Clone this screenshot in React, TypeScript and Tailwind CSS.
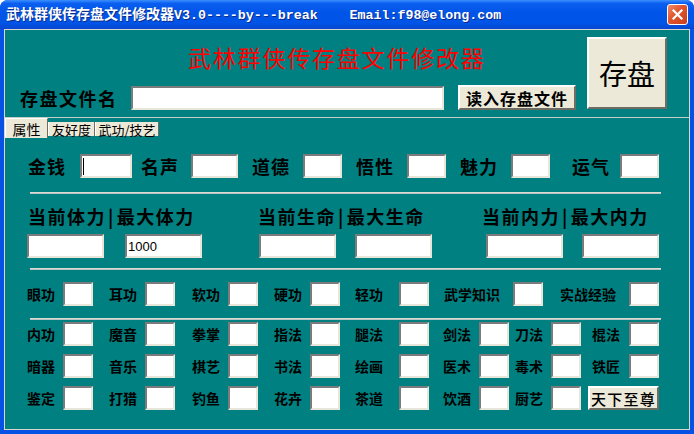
import React from "react"

const cjk = "font-['Noto_Sans_CJK_SC',sans-serif]"

type Item = { label: string; w: string; lw: string; iw?: string }

const topRow: Item[] = [
  { label: "金钱", w: "w-[113px]", lw: "w-[52px]", iw: "w-[52px]" },
  { label: "名声", w: "w-[111px]", lw: "w-[50px]", iw: "w-[47px]" },
  { label: "道德", w: "w-[104px]", lw: "w-[51px]", iw: "w-[39px]" },
  { label: "悟性", w: "w-[104px]", lw: "w-[51px]", iw: "w-[39px]" },
  { label: "魅力", w: "w-[112px]", lw: "w-[51px]", iw: "w-[39px]" },
  { label: "运气", w: "w-[87px]", lw: "w-[48px]", iw: "w-[39px]" },
]

const skillRow: Item[] = [
  { label: "眼功", w: "w-[82px]", lw: "w-[36px]" },
  { label: "耳功", w: "w-[83px]", lw: "w-[36px]" },
  { label: "软功", w: "w-[82px]", lw: "w-[36px]" },
  { label: "硬功", w: "w-[81px]", lw: "w-[36px]" },
  { label: "轻功", w: "w-[89px]", lw: "w-[44px]" },
  { label: "武学知识", w: "w-[116px]", lw: "w-[69px]" },
  { label: "实战经验", w: "w-[100px]", lw: "w-[69px]" },
]

// the 8-column grid of arts; widths shared by the three rows
const artCols = [
  { w: "w-[82px]", lw: "w-[36px]" },
  { w: "w-[83px]", lw: "w-[36px]" },
  { w: "w-[82px]", lw: "w-[36px]" },
  { w: "w-[81px]", lw: "w-[36px]" },
  { w: "w-[88px]", lw: "w-[44px]" },
  { w: "w-[72px]", lw: "w-[36px]" },
  { w: "w-[77px]", lw: "w-[36px]" },
  { w: "w-[67px]", lw: "w-[37px]" },
]

const artRows = [
  ["内功", "魔音", "拳掌", "指法", "腿法", "剑法", "刀法", "棍法"],
  ["暗器", "音乐", "棋艺", "书法", "绘画", "医术", "毒术", "铁匠"],
  ["鉴定", "打猎", "钓鱼", "花卉", "茶道", "饮酒", "厨艺", ""],
]

function Box({ w, children }: { w: string; children?: React.ReactNode }) {
  return (
    <div
      className={`${w} h-[24px] shrink-0 bg-white border-2 border-t-[#7b7b7b] border-l-[#7b7b7b] border-r-[#e8e5da] border-b-[#e8e5da] flex items-center overflow-hidden`}
    >
      {children}
    </div>
  )
}

function Divider() {
  return <div className="ml-[25px] w-[631px] h-[2px] bg-[#dcdad2] border-b border-[#b9c5c0]" />
}

function SmallField({ label, w, lw }: { label: string; w: string; lw: string }) {
  return (
    <div className={`flex items-center ${w}`}>
      <span className={`${lw} ${cjk} text-[14px] font-bold leading-none text-black`}>{label}</span>
      <Box w="w-[30px]" />
    </div>
  )
}

function CloseButton() {
  return (
    <div className="w-[21px] h-[21px] rounded-[3px] border border-white bg-[linear-gradient(135deg,#f08a6a_0%,#e0532c_45%,#c8401c_100%)] flex items-center justify-center">
      <svg width="13" height="13" viewBox="0 0 13 13">
        <path d="M2.5 2.5 L10.5 10.5 M10.5 2.5 L2.5 10.5" stroke="white" strokeWidth="2.2" strokeLinecap="square" />
      </svg>
    </div>
  )
}

export default function App() {
  return (
    <div className="w-[694px] h-[434px] bg-white">
      <div className="w-full h-full flex flex-col rounded-t-[8px] overflow-hidden bg-[#0552e4]">
        {/* title bar */}
        <div className="h-[29px] shrink-0 flex items-center pl-[6px] pr-[6px] bg-[linear-gradient(to_bottom,#3d8ffc_0%,#0a5ff0_12%,#0055e8_45%,#0054e6_80%,#0746cf_100%)]">
          <span className="whitespace-pre text-white font-bold [text-shadow:1px_1px_0_#0c2a8a] font-['Liberation_Mono','Noto_Sans_CJK_SC',monospace] text-[13.3px] leading-none">
            <span className={`${cjk} text-[14px]`}>武林群侠传存盘文件修改器</span>
            {"V3.0----by---break    Email:f98@elong.com"}
          </span>
          <div className="ml-auto">
            <CloseButton />
          </div>
        </div>

        {/* client area */}
        <div className="flex-1 mx-[4px] mb-[4px] border border-[#d6d8d0] bg-[#008080] flex flex-col">
          {/* header */}
          <div className="h-[87px] shrink-0 flex">
            <div className="w-[582px] flex flex-col">
              <div className={`mt-[13px] h-[28px] leading-[28px] pl-[183px] ${cjk} text-[23px] tracking-[1.8px] text-[#ff0000]`}>
                武林群侠传存盘文件修改器
              </div>
              <div className="mt-[14px] flex items-center pl-[15px]">
                <span className={`w-[111px] ${cjk} text-[18px] font-bold tracking-[1.5px] text-black leading-none`}>
                  存盘文件名
                </span>
                <Box w="w-[313px]" />
                <button
                  className={`ml-[14px] w-[118px] h-[25px] bg-[#ece9d8] border-2 border-t-white border-l-white border-r-[#6f6d63] border-b-[#6f6d63] ${cjk} text-[16px] font-bold tracking-[1px] leading-none text-black`}
                >
                  读入存盘文件
                </button>
              </div>
            </div>
            <button
              className={`mt-[7px] w-[80px] h-[72px] bg-[#ece9d8] border-2 border-t-white border-l-white border-r-[#6f6d63] border-b-[#6f6d63] ${cjk} text-[28px] leading-none text-black`}
            >
              存盘
            </button>
          </div>

          {/* tabs */}
          <div className="h-[21px] shrink-0 border-t border-[#c4ccc8] flex items-start">
            <div className={`h-[20px] w-[43px] bg-[#ece9d8] border-t border-l border-white border-r border-r-[#6f6d63] flex items-center justify-center ${cjk} text-[14px] text-black leading-none`}>
              属性
            </div>
            <div className={`mt-[4px] h-[14px] w-[47px] bg-[#ece9d8] border-l border-white border-r border-r-[#6f6d63] flex items-center justify-center ${cjk} text-[13px] text-black leading-none`}>
              友好度
            </div>
            <div className={`mt-[4px] h-[14px] w-[64px] bg-[#ece9d8] border-l border-white border-r border-r-[#6f6d63] flex items-center justify-center ${cjk} text-[13px] text-black leading-none`}>
              武功/技艺
            </div>
          </div>

          {/* attributes panel */}
          <div className="flex-1 flex flex-col">
            <div className="mt-[16px] pl-[23px] flex items-center">
              {topRow.map((it, i) => (
                <div key={it.label} className={`flex items-center ${it.w}`}>
                  <span className={`${it.lw} ${cjk} text-[18px] font-bold tracking-[1px] leading-none text-black`}>{it.label}</span>
                  <Box w={it.iw ?? "w-[39px]"}>
                    {i === 0 && <div className="ml-[1px] w-[1px] h-[17px] bg-black" />}
                  </Box>
                </div>
              ))}
            </div>

            <div className="mt-[14px]">
              <Divider />
            </div>

            <div className={`mt-[10px] h-[24px] pl-[23px] flex items-center ${cjk} text-[18px] font-bold tracking-[1.5px] leading-none text-black`}>
              <span className="w-[230px] whitespace-nowrap">
                当前体力<span className="mx-[2px]">|</span>最大体力
              </span>
              <span className="w-[224px] whitespace-nowrap">
                当前生命<span className="mx-[2px]">|</span>最大生命
              </span>
              <span className="whitespace-nowrap">
                当前内力<span className="mx-[2px]">|</span>最大内力
              </span>
            </div>

            <div className="mt-[6px] pl-[22px] flex items-center">
              <Box w="w-[77px]" />
              <div className="ml-[21px]">
                <Box w="w-[77px]">
                  <span className="pl-[1px] font-['Liberation_Sans',sans-serif] text-[13px] text-black leading-none">1000</span>
                </Box>
              </div>
              <div className="ml-[57px]">
                <Box w="w-[77px]" />
              </div>
              <div className="ml-[19px]">
                <Box w="w-[77px]" />
              </div>
              <div className="ml-[54px]">
                <Box w="w-[77px]" />
              </div>
              <div className="ml-[19px]">
                <Box w="w-[77px]" />
              </div>
            </div>

            <div className="mt-[10px]">
              <Divider />
            </div>

            <div className="mt-[12px] pl-[22px] flex items-center">
              {skillRow.map((it) => (
                <SmallField key={it.label} label={it.label} w={it.w} lw={it.lw} />
              ))}
            </div>

            <div className="mt-[12px]">
              <Divider />
            </div>

            {artRows.map((row, r) => (
              <div key={r} className={`${r === 0 ? "mt-[2px]" : "mt-[8px]"} pl-[22px] flex items-center`}>
                {row.map((label, c) =>
                  label ? (
                    <SmallField key={label} label={label} w={artCols[c].w} lw={artCols[c].lw} />
                  ) : (
                    <button
                      key="top"
                      className={`-ml-[4px] w-[71px] h-[24px] bg-[#ece9d8] border-2 border-t-white border-l-white border-r-[#6f6d63] border-b-[#6f6d63] ${cjk} text-[15px] font-medium tracking-[1.3px] leading-none text-black`}
                    >
                      天下至尊
                    </button>
                  )
                )}
              </div>
            ))}
          </div>
        </div>
      </div>
    </div>
  )
}
